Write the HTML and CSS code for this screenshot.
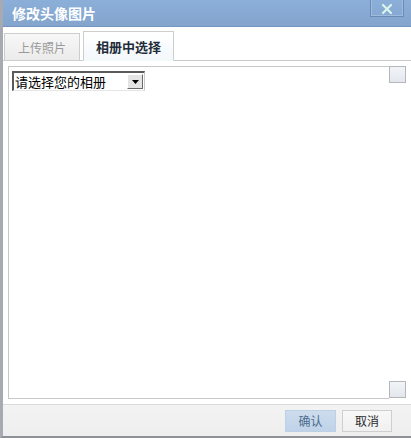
FILE: index.html
```html
<!DOCTYPE html>
<html lang="zh-CN">
<head>
<meta charset="utf-8">
<title>修改头像图片</title>
<link rel="stylesheet" href="styles.css">
</head>
<body>
<div class="dialog">
  <div class="titlebar">
    <span class="title">修改头像图片</span>
    <span class="close">
      <svg width="12" height="12" viewBox="0 0 12 12"><path d="M2 2 L10 10 M10 2 L2 10" stroke="#dcf5ea" stroke-width="2.2" stroke-linecap="round"/></svg>
    </span>
  </div>
  <div class="tabs">
    <div class="tab">上传照片</div>
    <div class="tab active">相册中选择</div>
  </div>
  <div class="body">
    <div class="box">
      <div class="pane">
        <div class="select">
          <span class="select-text">请选择您的相册</span>
          <span class="select-btn"><svg width="7" height="4" viewBox="0 0 7 4"><path d="M0 0 H7 L3.5 4 Z" fill="#000"/></svg></span>
        </div>
      </div>
      <div class="scroll">
        <div class="sq"></div>
        <div class="sq"></div>
      </div>
    </div>
  </div>
  <div class="footer">
    <button class="btn ok">确认</button>
    <button class="btn cancel">取消</button>
  </div>
</div>
</body>
</html>
```

FILE: styles.css
```css
html, body {
  margin: 0;
  padding: 0;
  background: #ffffff;
}
body {
  width: 411px;
  height: 438px;
  overflow: hidden;
  font-family: "Noto Sans CJK SC", "Noto Sans", sans-serif;
}
.dialog {
  width: 411px;
  height: 438px;
  box-sizing: border-box;
  border-left: 3px solid #a7abb1;
  border-bottom: 2px solid #8e9296;
  display: flex;
  flex-direction: column;
  background: #ffffff;
}
.titlebar {
  height: 26px;
  border-bottom: 1px solid #7595be;
  background: linear-gradient(#8cafd9, #82a4cd);
  display: flex;
  align-items: center;
  position: relative;
}
.title {
  margin-left: 9px;
  color: #ffffff;
  font-size: 14px;
  font-weight: bold;
  letter-spacing: 0;
  line-height: 26px;
}
.close {
  position: absolute;
  left: 367px;
  top: -2px;
  width: 32px;
  height: 17px;
  border: 1px solid #6b8bb5;
  box-shadow: inset 0 0 0 1px #9fbbe0;
  display: flex;
  align-items: center;
  justify-content: center;
}
.close svg {
  margin-top: 3px;
}
.tabs {
  height: 33px;
  border-bottom: 1px solid #c7c9cc;
  display: flex;
  align-items: flex-end;
  gap: 3px;
  padding-left: 1px;
}
.tab {
  box-sizing: border-box;
  margin-bottom: -1px;
  border: 1px solid #cccdcf;
  display: flex;
  align-items: center;
  justify-content: center;
}
.tab:first-child {
  width: 76px;
  height: 28px;
  background: linear-gradient(#f7f7f7, #ebebeb);
  color: #9a9a9a;
  font-size: 12px;
}
.tab.active {
  width: 91px;
  height: 30px;
  background: linear-gradient(#ffffff, #f3f8fb);
  border-bottom-color: #f3f8fb;
  color: #1f2d3a;
  font-size: 13px;
  font-weight: bold;
}
.body {
  flex: 1;
  padding: 5px 0 5px 5px;
  display: flex;
}
.box {
  width: 398px;
  display: flex;
}
.pane {
  flex: 1;
  border: 1px solid #c5c7ca;
  border-right: none;
}
.select {
  margin: 4px 0 0 3px;
  width: 133px;
  height: 20px;
  box-sizing: border-box;
  border-top: 2px solid #5a5a5a;
  border-left: 2px solid #5a5a5a;
  border-right: 1px solid #c9c9c9;
  border-bottom: 1px solid #e6e6e6;
  display: flex;
  align-items: center;
  justify-content: space-between;
  background: #ffffff;
}
.select-text {
  font-size: 13px;
  color: #000000;
  padding-left: 1px;
  line-height: 17px;
}
.select-btn {
  width: 16px;
  height: 15px;
  box-sizing: border-box;
  margin-right: 1px;
  background: #e4e4e4;
  border-top: 1px solid #ffffff;
  border-left: 1px solid #ffffff;
  border-right: 1px solid #6a6a6a;
  border-bottom: 1px solid #6a6a6a;
  display: flex;
  align-items: center;
  justify-content: center;
}
.scroll {
  width: 17px;
  display: flex;
  flex-direction: column;
  justify-content: space-between;
  padding-bottom: 1px;
}
.sq {
  width: 17px;
  height: 17px;
  box-sizing: border-box;
  border: 1px solid #b3b6ba;
  background: linear-gradient(#f2f4f7, #e3e7ed);
}
.footer {
  height: 32px;
  box-sizing: border-box;
  border-top: 1px solid #d9dadc;
  background: linear-gradient(#f3f3f3, #eeeeee);
  display: flex;
  justify-content: flex-end;
  align-items: center;
  gap: 6px;
  padding-right: 19px;
}
.btn {
  height: 22px;
  box-sizing: border-box;
  font-family: "Noto Sans CJK SC", "Noto Sans", sans-serif;
  font-size: 12px;
  padding: 0;
  margin: 0;
  line-height: 20px;
}
.btn.ok {
  width: 51px;
  background: linear-gradient(#cddced, #bfd2e8);
  border: 1px solid #bcd0e6;
  color: #4d6b8c;
}
.btn.cancel {
  width: 50px;
  background: linear-gradient(#f8f8f8, #f0f0f0);
  border: 1px solid #cfcfcf;
  color: #2a2a2a;
}
```
